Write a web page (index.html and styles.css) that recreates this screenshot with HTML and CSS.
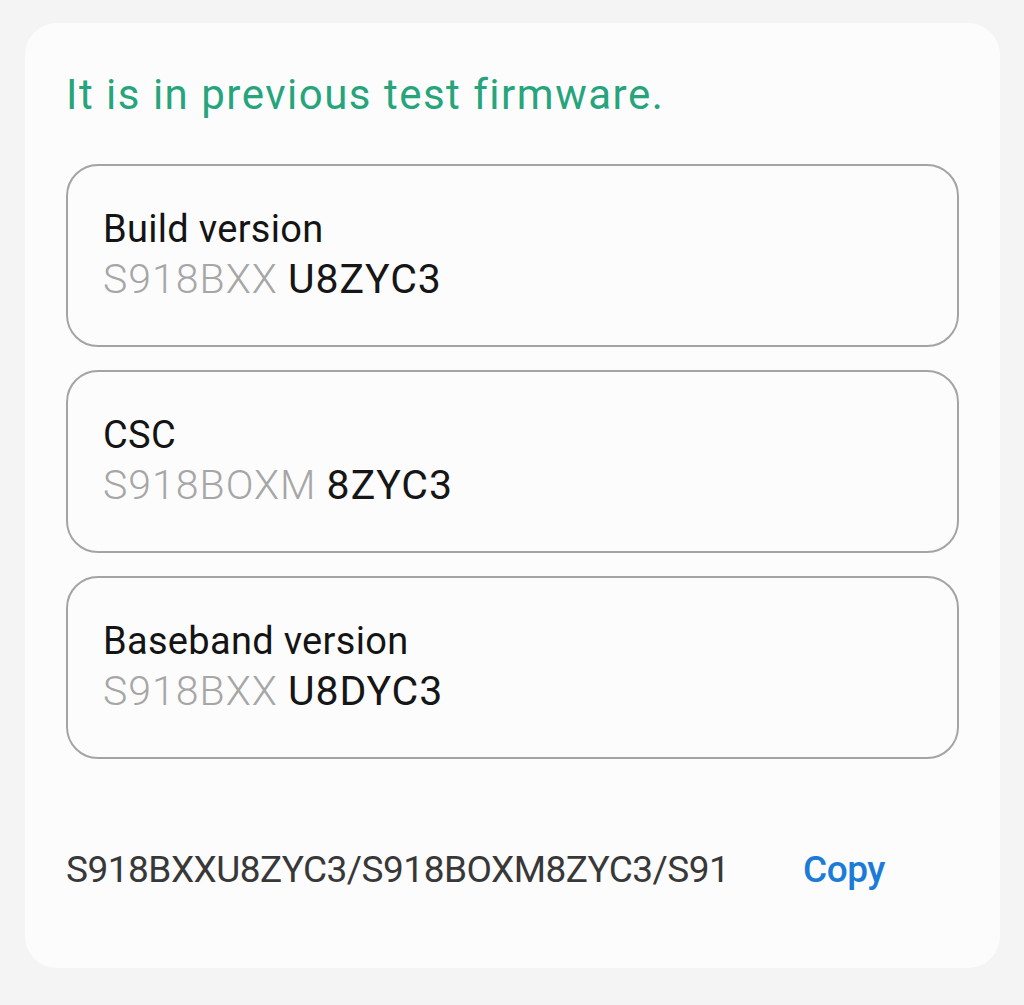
FILE: index.html
```html
<!DOCTYPE html>
<html lang="en">
<head>
<meta charset="utf-8">
<title>Firmware info</title>
<link rel="stylesheet" href="styles.css">
</head>
<body>
<div class="card">
  <p class="notice">It is in previous test firmware.</p>
  <div class="boxes">
    <div class="box">
      <div class="label">Build version</div>
      <div class="value"><span class="dim">S918BXX</span><span class="strong">U8ZYC3</span></div>
    </div>
    <div class="box">
      <div class="label">CSC</div>
      <div class="value"><span class="dim">S918BOXM</span><span class="strong">8ZYC3</span></div>
    </div>
    <div class="box">
      <div class="label">Baseband version</div>
      <div class="value"><span class="dim">S918BXX</span><span class="strong">U8DYC3</span></div>
    </div>
  </div>
  <div class="footer">
    <span class="full">S918BXXU8ZYC3/S918BOXM8ZYC3/S91</span>
    <span class="copy">Copy</span>
  </div>
</div>
</body>
</html>
```
FILE: styles.css
```css
html, body {
  margin: 0;
  padding: 0;
  background: #f4f4f4;
  font-family: Roboto, "Liberation Sans", sans-serif;
}
.card {
  margin: 23px 24px 0 25px;
  height: 945px;
  box-sizing: border-box;
  background: #fcfcfc;
  border-radius: 32px;
  padding: 0 41px 0 41px;
  display: flex;
  flex-direction: column;
}
.notice {
  margin: 0;
  padding-top: 48px;
  font-size: 42px;
  line-height: 48px;
  color: #26a57c;
  letter-spacing: 1.5px;
}
.boxes {
  margin-top: 45px;
  display: flex;
  flex-direction: column;
  gap: 23px;
}
.box {
  height: 183px;
  box-sizing: border-box;
  border: 2px solid #a4a4a4;
  border-radius: 32px;
  padding: 40px 36px 0 35px;
}
.label {
  font-size: 38px;
  line-height: 46px;
  color: #141414;
  letter-spacing: 0.3px;
}
.value {
  font-size: 41px;
  line-height: 54px;
  letter-spacing: 1px;
}
.dim {
  color: #a6a6a6;
  font-weight: 300;
  margin-right: 10px;
}
.strong {
  color: #161616;
}
.footer {
  margin-top: 87px;
  display: flex;
  align-items: baseline;
  font-size: 37px;
  line-height: 48px;
}
.full {
  color: #383838;
  width: 737px;
  letter-spacing: -0.5px;
}
.copy {
  color: #1a7bd8;
  font-weight: 500;
  letter-spacing: -0.5px;
}
```
